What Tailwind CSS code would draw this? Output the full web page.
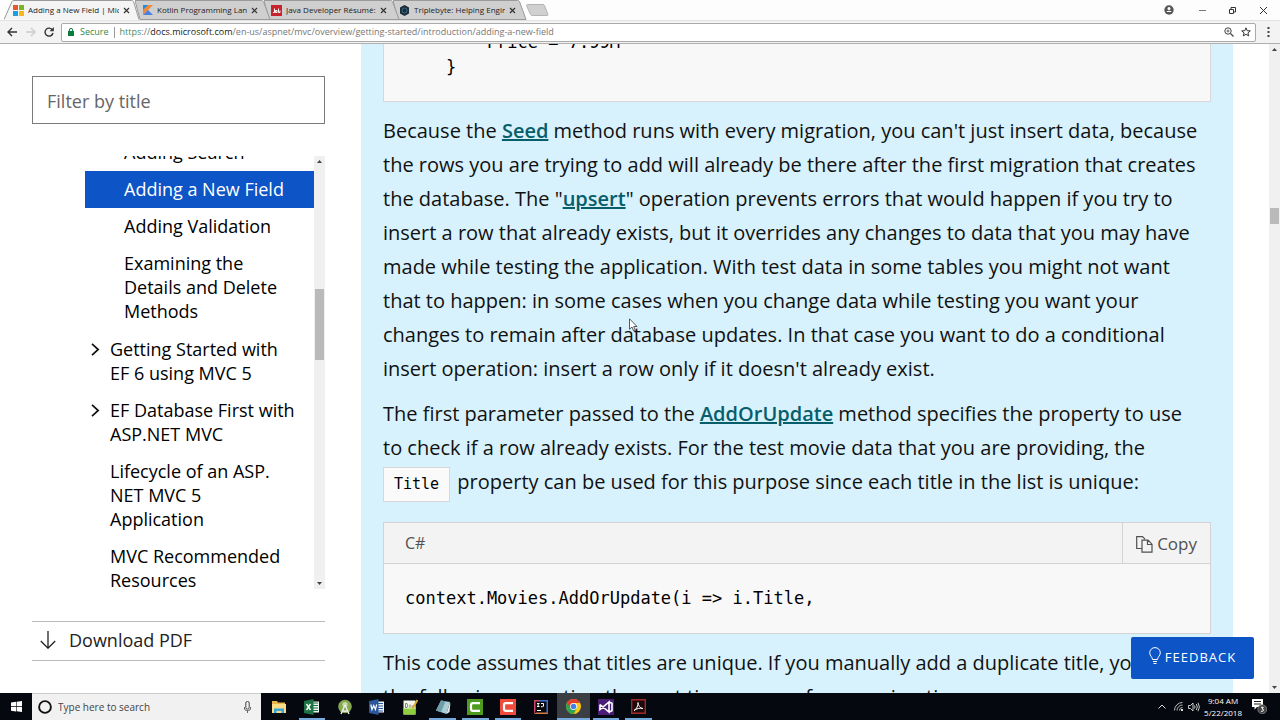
<!DOCTYPE html>
<html lang="en">
<head>
<meta charset="utf-8">
<title>Adding a New Field | Microsoft Docs</title>
<script src="https://cdn.jsdelivr.net/npm/@tailwindcss/browser@4"></script>
</head>
<body class="h-screen overflow-hidden flex flex-col bg-white font-['Open_Sans','Noto_Sans',sans-serif] text-black">

<!-- Tab strip -->
<header class="shrink-0">
  <div class="h-5 flex items-stretch bg-[#fdfdfd] pl-1 text-[8px] text-[#222]">
    <div class="relative z-40 w-[131px] shrink-0">
      <svg class="absolute inset-0 w-[136px] h-5" viewBox="0 0 136 20"><path d="M0 19.5 8 1.5Q8.500.5 10 .5H127.500Q129 .5 129.500 1.500L135 19.500" fill="#f4f4f4" stroke="#9a9a9a"/></svg>
      <div class="relative flex items-center h-5 pl-[9px] gap-1">
        <svg class="size-[11px] shrink-0" viewBox="0 0 11 11"><path fill="#e8562a" d="M0 0h5v5H0z"/><path fill="#7cb51f" d="M6 0h5v5H6z"/><path fill="#1a9fe0" d="M0 6h5v5H0z"/><path fill="#f6b71c" d="M6 6h5v5H6z"/></svg>
        <span class="w-[91px] overflow-hidden whitespace-nowrap">Adding a New Field | Mic</span>
        <button aria-label="Close tab" class="shrink-0"><svg class="size-[7px]" viewBox="0 0 7 7"><path d="M1 1l5 5M6 1 1 6" stroke="#333" stroke-width="1.2"/></svg></button>
      </div>
    </div>
    <div class="relative z-30 w-[129px] shrink-0">
      <svg class="absolute inset-0 w-[136px] h-5" viewBox="0 0 136 20"><path d="M0 .5H126.500Q128 .5 128.500 1.500L135 19.500H5Z" fill="#cfcfcf" stroke="#9a9a9a"/></svg>
      <div class="relative flex items-center h-5 pl-2 gap-1">
        <svg class="size-[10px] shrink-0" viewBox="0 0 10 10"><path d="M0 0h10L0 10z" fill="#f0883a"/><path d="M0 0h5L0 5z" fill="#1d8fe0"/><path d="M0 10l5-5 5 5z" fill="#4a7fdc"/></svg>
        <span class="w-[90px] overflow-hidden whitespace-nowrap">Kotlin Programming Lan</span>
        <button aria-label="Close tab" class="shrink-0"><svg class="size-[7px]" viewBox="0 0 7 7"><path d="M1 1l5 5M6 1 1 6" stroke="#333" stroke-width="1.2"/></svg></button>
      </div>
    </div>
    <div class="relative z-20 w-[129px] shrink-0">
      <svg class="absolute inset-0 w-[136px] h-5" viewBox="0 0 136 20"><path d="M0 .5H126.500Q128 .5 128.500 1.500L135 19.500H5Z" fill="#cfcfcf" stroke="#9a9a9a"/></svg>
      <div class="relative flex items-center h-5 pl-[7px] gap-1">
        <svg class="size-[11px] shrink-0" viewBox="0 0 11 11"><path fill="#c8222c" d="M0 0h11v11H0z"/><path d="M2 7.500h1.500V3.500M4.500 5.500h1.500v2H4.500V5.500M7.500 3.500v4h1.500v-2" fill="none" stroke="#fff"/></svg>
        <span class="w-[90px] overflow-hidden whitespace-nowrap">Java Developer Résumé:</span>
        <button aria-label="Close tab" class="shrink-0"><svg class="size-[7px]" viewBox="0 0 7 7"><path d="M1 1l5 5M6 1 1 6" stroke="#333" stroke-width="1.2"/></svg></button>
      </div>
    </div>
    <div class="relative z-10 w-[133px] shrink-0">
      <svg class="absolute inset-0 w-[136px] h-5" viewBox="0 0 136 20"><path d="M0 .5H124.500Q126 .5 126.500 1.500L133 19.500H5Z" fill="#cfcfcf" stroke="#9a9a9a"/></svg>
      <div class="relative flex items-center h-5 pl-[6px] gap-1">
        <svg class="size-[11px] shrink-0" viewBox="0 0 11 11"><path d="M5.500 0l4.500 2.500v6L5.500 11 1 8.500v-6z" fill="#1c2b38"/><circle cx="5.500" cy="5.500" r="2.500" fill="none" stroke="#3b6f86"/></svg>
        <span class="w-[91px] overflow-hidden whitespace-nowrap">Triplebyte: Helping Engin</span>
        <button aria-label="Close tab" class="shrink-0"><svg class="size-[7px]" viewBox="0 0 7 7"><path d="M1 1l5 5M6 1 1 6" stroke="#333" stroke-width="1.2"/></svg></button>
      </div>
    </div>
    <button aria-label="New tab" class="shrink-0"><svg class="w-[23px] h-3" viewBox="0 0 23 12"><path d="M1.500.5H17Q18 .5 18.500 1.500L22 10.500Q22 11.500 21 11.500H6Q5 11.500 4.500 10.500L.5 1.500Q.5.5 1.500.5Z" fill="#d0d0d0" stroke="#b5b5b5"/></svg></button>
    <div class="ml-auto flex items-center">
      <svg class="size-[10px] mr-[25px]" viewBox="0 0 10 10"><circle cx="5" cy="5" r="4.700" fill="#555"/><circle cx="5" cy="3.500" r="1.500" fill="#fff"/><path d="M2.200 7a3 2 0 0 1 5.600 0z" fill="#fff"/></svg>
      <button aria-label="Minimize" class="mr-[23px]"><svg class="w-[7px] h-2" viewBox="0 0 7 8"><path d="M0 4.500h7" stroke="#777"/></svg></button>
      <button aria-label="Restore" class="mr-6"><svg class="size-[7px]" viewBox="0 0 7 7"><path d="M.5 2.500h4v4h-4zM2 2.500v-2h4.500V5H5" fill="none" stroke="#333"/></svg></button>
      <button aria-label="Close window" class="mr-[13px]"><svg class="size-[7px]" viewBox="0 0 7 7"><path d="M0 0l7 7M7 0 0 7" stroke="#333"/></svg></button>
    </div>
  </div>

  <!-- Address bar -->
  <div class="h-6 flex items-center bg-[#f3f3f3] border-t border-[#e2e2e2] border-b border-b-[#b0b0b0] pl-[7px] pr-[10px]">
    <button aria-label="Back"><svg class="size-[10px]" viewBox="0 0 10 10"><path d="M10 5H1M5 1 1 5l4 4" fill="none" stroke="#333" stroke-width="1.400"/></svg></button>
    <button aria-label="Forward" class="ml-[9px]"><svg class="size-[10px]" viewBox="0 0 10 10"><path d="M0 5h9M5 1l4 4-4 4" fill="none" stroke="#ccc" stroke-width="1.400"/></svg></button>
    <button aria-label="Reload" class="ml-[8px]"><svg class="size-[10px]" viewBox="0 0 10 10"><path d="M8.500 3A4 4 0 1 0 9 6" fill="none" stroke="#333" stroke-width="1.400"/><path d="M9.800 0v4.200H5.600z" fill="#333"/></svg></button>
    <div class="ml-[7px] flex-1 h-[19px] flex items-center bg-white border border-[#aaa] rounded-xs pl-[6px] pr-1 text-[9px] leading-3">
      <svg class="w-[6px] h-2 shrink-0" viewBox="0 0 6 8"><path d="M0 3h6v5H0z" fill="#0b7a3b"/><path d="M1.400 3.500V2a1.600 1.600 0 0 1 3.200 0v1.500" fill="none" stroke="#0b7a3b"/></svg>
      <span class="ml-[6px] text-[#2c8a4e]">Secure</span>
      <span class="mx-[5px] w-px h-[11px] bg-[#999]"></span>
      <span class="text-[#777]"><span class="text-[#4b8b62]">https</span>://<span class="text-[#222]">docs.microsoft.com</span>/en-us/aspnet/mvc/overview/getting-started/introduction/adding-a-new-field</span>
      <svg class="ml-auto size-[10px]" viewBox="0 0 10 10"><circle cx="4" cy="4" r="3.200" fill="none" stroke="#444"/><path d="M6.500 6.500 9.500 9.500" stroke="#444" stroke-width="1.300"/><path d="M2.500 4h3M4 2.500v3" stroke="#444" stroke-width=".8"/></svg>
      <svg class="ml-[7px] size-[10px]" viewBox="0 0 10 10"><path d="M5 .8l1.200 2.900 3.100.2-2.400 2 .8 3L5 7.300 2.300 8.900l.8-3-2.400-2 3.100-.2z" fill="none" stroke="#333"/></svg>
    </div>
    <button aria-label="Menu" class="ml-[11px]"><svg class="w-[3px] h-[10px]" viewBox="0 0 3 10"><path d="M.5 0h2v2h-2zM.5 4h2v2h-2zM.5 8h2v2h-2z" fill="#444"/></svg></button>
  </div>
</header>

<!-- Page -->
<div class="relative flex-1 min-h-0 flex overflow-hidden">
  <aside class="w-[293px] ml-8 mr-9 shrink-0 flex flex-col pt-8">
    <input type="text" aria-label="Filter by title" placeholder="Filter by title" class="h-12 w-full border border-[#7a7a7a] px-[14px] pt-[2px] text-[18px] placeholder:text-[#666] outline-none">
    <div class="mt-8 h-[433px] flex overflow-hidden">
      <nav class="flex-1 pl-[53px] text-[18px] leading-6 overflow-hidden whitespace-nowrap">
        <ul class="-mt-[22px] mb-px">
          <li><a href="#" class="block pl-[39px] pt-[6px] pb-[7px]">Adding Search</a></li>
          <li><a href="#" class="block pl-[39px] pt-[6px] pb-[7px] bg-[#0d54c6] text-white">Adding a New Field</a></li>
          <li><a href="#" class="block pl-[39px] pt-[6px] pb-[7px]">Adding Validation</a></li>
          <li><a href="#" class="block pl-[39px] pt-[6px] pb-[7px]">Examining the<br>Details and Delete<br>Methods</a></li>
        </ul>
        <ul>
          <li class="flex pt-[6px] pb-[7px]"><svg class="mt-[6px] ml-[6px] mr-[10px] w-[9px] h-[13px]" viewBox="0 0 9 13"><path d="M1 .8 7.200 6.500 1 12.200" fill="none" stroke="#111" stroke-width="1.700"/></svg><a href="#">Getting Started with<br>EF 6 using MVC 5</a></li>
          <li class="flex pt-[6px] pb-[7px]"><svg class="mt-[6px] ml-[6px] mr-[10px] w-[9px] h-[13px]" viewBox="0 0 9 13"><path d="M1 .8 7.200 6.500 1 12.200" fill="none" stroke="#111" stroke-width="1.700"/></svg><a href="#">EF Database First with<br>ASP.NET MVC</a></li>
          <li><a href="#" class="block pl-[25px] pt-[6px] pb-[7px]">Lifecycle of an ASP.<br>NET MVC 5<br>Application</a></li>
          <li><a href="#" class="block pl-[25px] pt-[6px] pb-[7px]">MVC Recommended<br>Resources</a></li>
        </ul>
      </nav>
      <div class="w-[11px] shrink-0 bg-[#f0f0f0] flex flex-col items-center justify-between py-1">
        <svg class="w-[5px] h-[3px]" viewBox="0 0 5 3"><path d="M0 3h5L2.500 0z" fill="#444"/></svg>
        <div class="flex-1 w-[9px] pt-[126px]"><div class="h-[71px] bg-[#bababa]"></div></div>
        <svg class="w-[5px] h-[3px]" viewBox="0 0 5 3"><path d="M0 0h5L2.500 3z" fill="#444"/></svg>
      </div>
    </div>
    <a href="#" class="mt-8 h-10 flex items-center border-y border-[#bbb] pl-2 pb-[2px] text-[18px] text-[#222]">
      <svg class="w-4 h-[18px] mr-[13px]" viewBox="0 0 16 18"><path d="M8 0v17M.8 10 8 17.200 15.200 10" fill="none" stroke="#222" stroke-width="1.300"/></svg>Download PDF
    </a>
  </aside>

  <main class="flex-1 min-w-0 mr-9 bg-[#d7f1fd] px-[22px] text-[20px] leading-[34px] text-[#111] whitespace-nowrap overflow-hidden">
    <pre class="-mt-[22px] h-20 flex flex-col justify-end bg-[#f8f8f8] border border-[#d8d8d8] px-[21px] pb-[21px] leading-[25px] text-black"><code class="font-['DejaVu_Sans_Mono',monospace] text-[17px]">        Price = 7.99M
    }</code></pre>
    <p class="mt-3">Because the <a href="#" class="font-semibold underline text-[#075e6b]">Seed</a> method runs with every migration, you can't just insert data, because<br>the rows you are trying to add will already be there after the first migration that creates<br>the database. The "<a href="#" class="font-semibold underline text-[#075e6b]">upsert</a>" operation prevents errors that would happen if you try to<br>insert a row that already exists, but it overrides any changes to data that you may have<br>made while testing the application. With test data in some tables you might not want<br>that to happen: in some cases when you change data while testing you want your<br>changes to remain after database updates. In that case you want to do a conditional<br>insert operation: insert a row only if it doesn't already exist.</p>
    <p class="mt-[11px]">The first parameter passed to the <a href="#" class="font-semibold underline text-[#075e6b]">AddOrUpdate</a> method specifies the property to use<br>to check if a row already exists. For the test movie data that you are providing, the<br><code class="inline-block h-[35px] leading-[33px] px-[10px] mr-[2px] bg-[#fafafa] border border-[#d8d8d8] font-['DejaVu_Sans_Mono',monospace] text-[15px] text-black">Title</code> property can be used for this purpose since each title in the list is unique:</p>
    <div class="mt-5 border border-[#d3d3d3] bg-[#f8f8f8]">
      <div class="h-[41px] flex items-stretch bg-[#f3f3f3] border-b border-[#d3d3d3] text-[16px] text-[#505050]">
        <span class="flex-1 flex items-center px-[21px]">C#</span>
        <button class="flex items-center gap-1 border-l border-[#d3d3d3] px-[13px] pt-[2px] text-[17px]">
          <svg class="size-[17px]" viewBox="0 0 17 17"><path d="M6 12.500H.7V.7H6.500L9 3.200M6 4.200H12L16 8.200V16.200H6ZM11.500 4.500V8.500H16" fill="none" stroke="#505050" stroke-width="1.200"/></svg>Copy
        </button>
      </div>
      <pre class="px-[21px] py-[22px] leading-6 text-black"><code class="font-['DejaVu_Sans_Mono',monospace] text-[17px]">context.Movies.AddOrUpdate(i =&gt; i.Title,</code></pre>
    </div>
    <p class="mt-3">This code assumes that titles are unique. If you manually add a duplicate title, you'll get<br>the following exception the next time you perform a migration.</p>
  </main>

  <div class="w-[11px] shrink-0 bg-[#f0f0f0] flex flex-col items-center py-1">
    <svg class="w-[5px] h-[3px]" viewBox="0 0 5 3"><path d="M0 3h5L2.500 0z" fill="#444"/></svg>
    <div class="flex-1 w-[9px] pt-[157px]"><div class="h-4 bg-[#bababa]"></div></div>
    <svg class="w-[5px] h-[3px]" viewBox="0 0 5 3"><path d="M0 0h5L2.500 3z" fill="#444"/></svg>
  </div>

  <button class="absolute right-[26px] bottom-[14px] h-[42px] w-[123px] flex items-center justify-center gap-1 rounded-xs bg-[#0d54c6] text-white text-[13px] tracking-[1px]">
    <svg class="w-3 h-[18px] mb-1" viewBox="0 0 12 18"><path d="M3.500 12.500C3.500 10 .7 9 .7 5.800A5.300 5.200 0 0 1 11.300 5.800C11.300 9 8.500 10 8.500 12.500ZM4 14.500h4M4.500 16.500h3" fill="none" stroke="#fff"/></svg>FEEDBACK
  </button>

  <!-- Mouse pointer -->
  <svg class="absolute left-[629px] top-[274px] w-[9px] h-[14px]" viewBox="0 0 9 14"><path d="M.5.8v10.500L3 9l1.700 4 1.600-.7L4.700 8.500H8z" fill="#fff" stroke="#333" stroke-width=".8"/></svg>
</div>

<!-- Taskbar -->
<footer class="h-[27px] shrink-0 flex items-stretch bg-[#05080f] text-white">
  <button aria-label="Start" class="w-8 flex items-center justify-center"><svg class="size-[11px]" viewBox="0 0 11 11"><path d="M0 1.500 5 .8v4.500H0zM5.600.7 11 0v5.300H5.600zM0 5.900h5v4.500L0 9.700zM5.600 5.900H11V11l-5.400-.7z" fill="#fff"/></svg></button>
  <label class="w-[229px] flex items-center bg-[#f1f1f1] border-t border-[#ccc] pl-[6px] pr-[10px]">
    <svg class="size-[14px] shrink-0" viewBox="0 0 14 14"><circle cx="7" cy="7" r="5.900" fill="none" stroke="#111" stroke-width="1.900"/></svg>
    <input type="text" aria-label="Search" placeholder="Type here to search" class="flex-1 min-w-0 ml-[6px] text-[10px] placeholder:text-[#444] outline-none">
    <svg class="w-[7px] h-3" viewBox="0 0 7 12"><rect x="1.800" y=".5" width="3.400" height="7.500" rx="1.500" fill="none" stroke="#444"/><path d="M.5 6v2q0 1.500 3 1.500t3-1.500V6M3.500 9.500V12" fill="none" stroke="#444" stroke-width=".8"/></svg>
  </label>
  <div class="w-[392px] ml-[2px] grid grid-cols-12">
    <button aria-label="File Explorer" class="flex items-center justify-center"><svg class="size-4" viewBox="0 0 16 16"><path d="M1 2h5l1 1.500h7V14H1z" fill="#e7b34b"/><path d="M1 5h14v9H1z" fill="#fbdc86"/><path d="M3 14V9.500h10V14h-2.500v-2h-5v2z" fill="#38a5d8"/></svg></button>
    <button aria-label="Excel" class="flex items-center justify-center relative"><svg class="size-4" viewBox="0 0 16 16"><path d="M8 2.500h7v11H8z" fill="#e9f2ec"/><path d="M9 4h5M9 6.500h5M9 9h5M9 11.500h5" stroke="#217346" stroke-width="1.200"/><path d="M0 2 9.500 0v16L0 14z" fill="#1e7145"/><path d="M2.500 5l4 6M6.500 5l-4 6" stroke="#fff" stroke-width="1.400"/></svg><i class="absolute bottom-0 inset-x-[3px] h-[2px] bg-[#76a9dc]"></i></button>
    <button aria-label="Android Studio" class="flex items-center justify-center"><svg class="size-4" viewBox="0 0 16 16"><circle cx="8" cy="7.500" r="6.800" fill="#86a853"/><circle cx="8" cy="5.500" r="2.600" fill="#c5dba2"/><path d="M8 6 4 15M8 6l4 9M5 11.500q3 1.500 6 0" fill="none" stroke="#eee" stroke-width="1.400"/></svg></button>
    <button aria-label="Word" class="flex items-center justify-center"><svg class="size-4" viewBox="0 0 16 16"><path d="M8 2.500h7v11H8z" fill="#eef2fa"/><path d="M9 4.500h5M9 7h5M9 9.500h5M9 12h5" stroke="#2b579a"/><path d="M0 2 9.500 0v16L0 14z" fill="#2b579a"/><path d="M1.800 5.500 3 10.500l1.700-4 1.700 4 1.300-5" fill="none" stroke="#fff" stroke-width="1.200"/></svg></button>
    <button aria-label="Notepad++" class="flex items-center justify-center"><svg class="size-4" viewBox="0 0 16 16"><path d="M1.500 1.500h12v14h-12z" fill="#f3f5e8"/><path d="M1.500 9.500h12v6h-12z" fill="#8fce3c"/><path d="M1.500 9.500 13.500 7v3h-12z" fill="#c4e58f"/><path d="M3.500 4.500v4h1.500q1.500-2 0-4zM8 5.500v3M9.500 7h2.500" fill="none" stroke="#666" stroke-width=".8"/><path d="M15.500 1 10.500 9.500" stroke="#e0a92e" stroke-width="2"/></svg></button>
    <button aria-label="Notepad" class="flex items-center justify-center relative"><svg class="size-4" viewBox="0 0 16 16"><path d="M6 1.500l9 1.500L11.500 15 1 11.500z" fill="#a9ccd5"/><path d="M15 3 11.500 15l3-2 .8-8z" fill="#e4eef0"/><path d="M6 1.500 1 11.500l5 1.700L10.500 2.200z" fill="#6e9da9"/></svg><i class="absolute bottom-0 inset-x-[3px] h-[2px] bg-[#76a9dc]"></i></button>
    <button aria-label="Camtasia" class="flex items-center justify-center relative"><svg class="size-4" viewBox="0 0 16 16"><path d="M0 0h16v16H0z" fill="#4f9b1f"/><path d="M13 4.200H6Q4 4.200 4 6v4q0 1.800 2 1.800h7" fill="none" stroke="#fff" stroke-width="2.200"/></svg><i class="absolute bottom-0 inset-x-[3px] h-[2px] bg-[#76a9dc]"></i></button>
    <button aria-label="Camtasia Recorder" class="flex items-center justify-center relative"><svg class="size-4" viewBox="0 0 16 16"><path d="M0 0h16v16H0z" fill="#ee4b3c"/><path d="M13 4.200H6Q4 4.200 4 6v4q0 1.800 2 1.800h7" fill="none" stroke="#fff" stroke-width="2.200"/></svg><i class="absolute bottom-0 inset-x-[3px] h-[2px] bg-[#76a9dc]"></i></button>
    <button aria-label="IntelliJ IDEA" class="flex items-center justify-center"><svg class="size-[14px]" viewBox="0 0 14 14"><path d="M0 0h8L0 14z" fill="#c9486a"/><path d="M6 0h8v14H4z" fill="#3d6fd6"/><path d="M0 14 8 8l6 6z" fill="#d9793b"/><path d="M1.500 1.500h11v11h-11z" fill="#0a0a0f"/><path d="M3 3.500h2.500M4.200 3.500v3M3 6.500h2.500M7 3.500h2.500V6q0 .7-1 .7H7M3 10.500h4" fill="none" stroke="#fff"/></svg></button>
    <button aria-label="Chrome" class="flex items-center justify-center relative bg-[#3b3f44]"><svg class="size-[15px]" viewBox="0 0 16 16"><circle cx="8" cy="8" r="8" fill="#fbc816"/><path d="M8 8 1.070 4A8 8 0 0 0 8 16l3.500-6z" fill="#32a350"/><path d="M8 4.300h6.950L14.930 4A8 8 0 0 0 1.070 4L4.800 10z" fill="#e23f30"/><circle cx="8" cy="8" r="3.700" fill="#fff"/><circle cx="8" cy="8" r="2.900" fill="#3f7fe8"/></svg><i class="absolute bottom-0 inset-x-0 h-[2px] bg-[#76a9dc]"></i></button>
    <button aria-label="Visual Studio" class="flex items-center justify-center relative"><svg class="size-4" viewBox="0 0 16 16"><path d="M0 0h16v16H0z" fill="#4b1d75"/><path d="M2 5.500v5L11 3v10L2 5.500M11 3l3 1.300v7.400L11 13" fill="none" stroke="#fff" stroke-width="1.600"/></svg><i class="absolute bottom-0 inset-x-[3px] h-[2px] bg-[#76a9dc]"></i></button>
    <button aria-label="Adobe Reader" class="flex items-center justify-center relative"><svg class="size-[15px]" viewBox="0 0 15 15"><path d="M.7.7h13.600v13.600H.7z" fill="#1e0a0c" stroke="#a3282b" stroke-width="1.400"/><path d="M3 11.500C5.500 10.500 7.500 6 7 3.500 7 6 9 9.500 12 9.500 9 8.800 5.500 9.500 3 11.500Z" fill="none" stroke="#fff"/></svg><i class="absolute bottom-0 inset-x-[3px] h-[2px] bg-[#76a9dc]"></i></button>
  </div>
  <div class="ml-auto flex items-center pr-[13px]">
    <svg class="w-2 h-[5px] mr-2" viewBox="0 0 8 5"><path d="M.5 4.500 4 1l3.500 3.500" fill="none" stroke="#ddd"/></svg>
    <svg class="size-[9px] mr-[5px]" viewBox="0 0 9 9"><path d="M.5 8.500A8 8 0 0 1 8.500.5M3 8.500A5.500 5.500 0 0 1 8.500 3M5.500 8.500a3 3 0 0 1 3-3" fill="none" stroke="#bbb"/><path d="M7 7h2v2H7z" fill="#ddd"/></svg>
    <svg class="w-3 h-[10px] mr-[5px]" viewBox="0 0 12 10"><path d="M.5 3.500h2L5 1v8L2.500 6.500h-2zM6.500 3.500q1 1.500 0 3M8.300 2q2 3 0 6M10 .8q2.800 4.200 0 8.400" fill="none" stroke="#ddd" stroke-width=".9"/></svg>
    <div class="w-[36px] flex flex-col items-center text-[8px] leading-3 whitespace-nowrap"><span>9:04 AM</span><span>5/22/2018</span></div>
    <svg class="ml-[11px] size-[15px]" viewBox="0 0 15 15"><path d="M0 0h11v8H5L2.500 10.500V8H0z" fill="#fff"/><path d="M2 2.500h7M2 5h7" stroke="#222"/><circle cx="10.300" cy="10.300" r="4.500" fill="#444" stroke="#888" stroke-width=".7"/><path d="M9 8.300h2.300L10 10q1.700 0 1.500 1.300T9 12.300" fill="none" stroke="#fff"/></svg>
  </div>
</footer>
</body>
</html>
